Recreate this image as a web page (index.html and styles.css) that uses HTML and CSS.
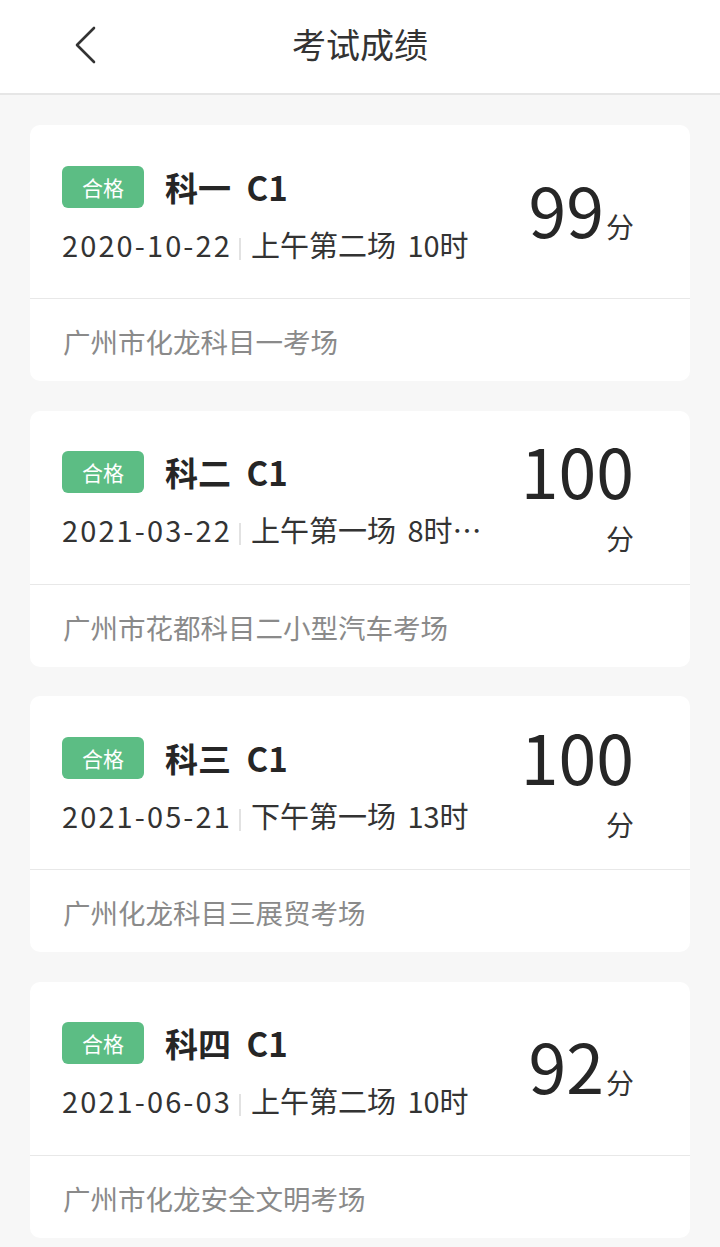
FILE: index.html
```html
<!DOCTYPE html>
<html lang="zh-CN">
<head>
    <meta charset="UTF-8">
    <meta name="viewport" content="width=device-width, initial-scale=1.0">
    <title>考试成绩</title>
    <link rel="stylesheet" href="styles.css">
</head>
<body>
    <header class="nav">
        <svg class="back" width="24" height="40" viewBox="0 0 24 40">
            <path d="M20 3 L3 20 L20 37" fill="none" stroke="#333" stroke-width="2.6" stroke-linecap="round" stroke-linejoin="round"/>
        </svg>
        <h1>考试成绩</h1>
    </header>

    <main class="list">
        <div class="card">
            <div class="card-main">
                <div class="info">
                    <div class="info-head"><span class="tag">合格</span><span class="subject">科一 C1</span></div>
                    <div class="info-time"><span class="date">2020-10-22</span><i class="sep"></i>上午第二场 10时</div>
                </div>
                <div class="score"><span class="num">99</span><span class="unit">分</span></div>
            </div>
            <div class="card-foot">广州市化龙科目一考场</div>
        </div>

        <div class="card">
            <div class="card-main">
                <div class="info">
                    <div class="info-head"><span class="tag">合格</span><span class="subject">科二 C1</span></div>
                    <div class="info-time"><span class="date">2021-03-22</span><i class="sep"></i>上午第一场 8时30分</div>
                </div>
                <div class="score"><span class="num">100</span><span class="unit">分</span></div>
            </div>
            <div class="card-foot">广州市花都科目二小型汽车考场</div>
        </div>

        <div class="card">
            <div class="card-main">
                <div class="info">
                    <div class="info-head"><span class="tag">合格</span><span class="subject">科三 C1</span></div>
                    <div class="info-time"><span class="date">2021-05-21</span><i class="sep"></i>下午第一场 13时</div>
                </div>
                <div class="score"><span class="num">100</span><span class="unit">分</span></div>
            </div>
            <div class="card-foot">广州化龙科目三展贸考场</div>
        </div>

        <div class="card">
            <div class="card-main">
                <div class="info">
                    <div class="info-head"><span class="tag">合格</span><span class="subject">科四 C1</span></div>
                    <div class="info-time"><span class="date">2021-06-03</span><i class="sep"></i>上午第二场 10时</div>
                </div>
                <div class="score"><span class="num">92</span><span class="unit">分</span></div>
            </div>
            <div class="card-foot">广州市化龙安全文明考场</div>
        </div>
    </main>
</body>
</html>
```

FILE: styles.css
```css
body {
    margin: 0;
    background-color: #f7f7f7;
    font-family: "Noto Sans CJK SC", "Noto Sans", sans-serif;
    color: #333;
}

.nav {
    display: flex;
    align-items: center;
    justify-content: center;
    position: relative;
    height: 95px;
    box-sizing: border-box;
    padding-bottom: 7px;
    background-color: #fff;
    border-bottom: 2px solid #e6e6e6;
}
.nav h1 {
    margin: 0;
    font-size: 34px;
    font-weight: 400;
    color: #333;
}
.back {
    position: absolute;
    left: 74px;
    top: 25px;
}

.list {
    display: flex;
    flex-direction: column;
    gap: 29.5px;
    padding: 30px 30px 0;
}

.card {
    background-color: #fff;
    border-radius: 10px;
    overflow: hidden;
}
.card-main {
    display: flex;
    align-items: center;
    height: 174px;
    box-sizing: border-box;
    padding: 0 56px 0 32px;
    border-bottom: 1px solid #e8e8e8;
}
.info {
    flex: 1;
    min-width: 0;
    margin-top: 6px;
}
.info-head {
    display: flex;
    align-items: center;
    height: 42px;
}
.tag {
    display: inline-block;
    width: 82px;
    height: 42px;
    line-height: 42px;
    text-align: center;
    border-radius: 6px;
    background-color: #5cbd84;
    color: #fff;
    font-size: 21px;
}
.subject {
    margin-left: 21px;
    font-size: 33px;
    font-weight: 700;
    word-spacing: 8px;
    color: #262626;
}
.info-time {
    margin-top: 16px;
    height: 40px;
    line-height: 40px;
    font-size: 29px;
    word-spacing: 5px;
    white-space: nowrap;
    overflow: hidden;
    text-overflow: ellipsis;
}
.date {
    letter-spacing: 2.1px;
}
.sep {
    display: inline-block;
    width: 2px;
    height: 22px;
    margin: 0 10px 0 7px;
    vertical-align: -3px;
    background-color: #e2e2e2;
}

.score {
    display: flex;
    flex-wrap: wrap;
    justify-content: flex-end;
    align-items: baseline;
    row-gap: 20px;
    width: 112px;
    margin: -6px 0 0 28px;
    color: #262626;
}
.num {
    font-size: 68px;
    line-height: 68px;
}
.unit {
    margin-left: 2px;
    font-size: 28px;
    line-height: 28px;
    color: #333;
}

.card-foot {
    height: 82px;
    line-height: 84px;
    padding-left: 33px;
    font-size: 27.5px;
    color: #8a8a8a;
}
```
